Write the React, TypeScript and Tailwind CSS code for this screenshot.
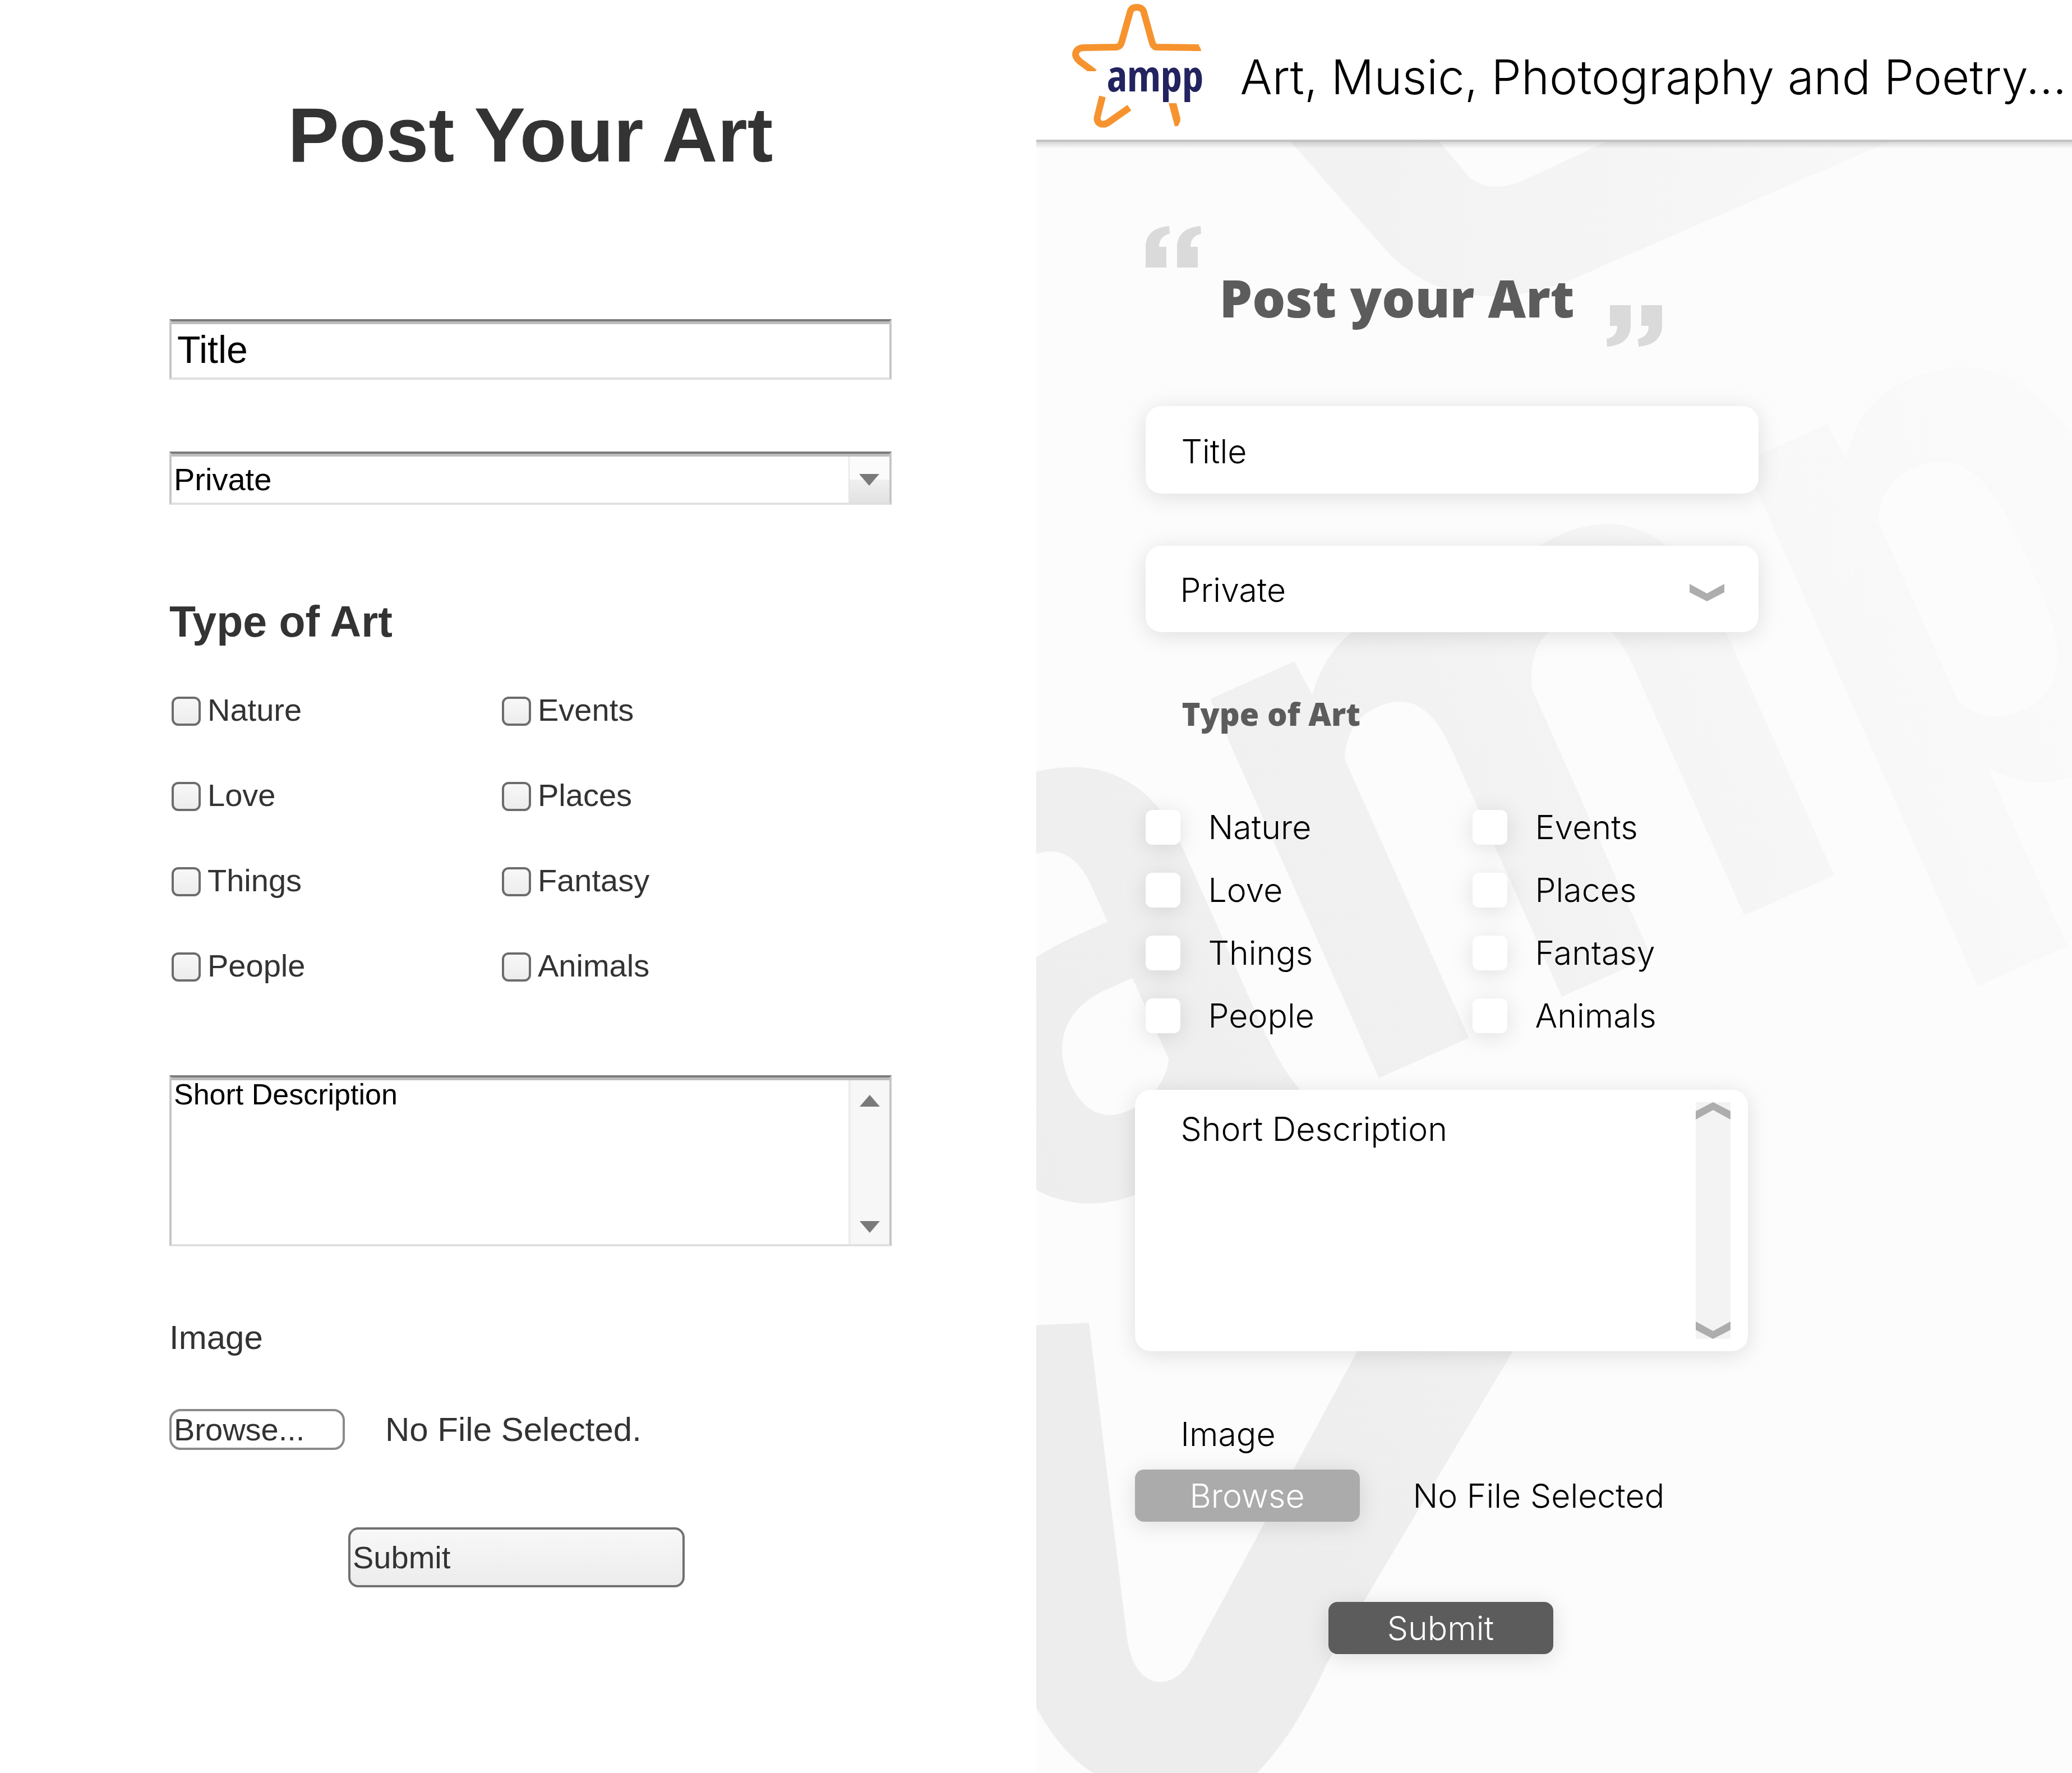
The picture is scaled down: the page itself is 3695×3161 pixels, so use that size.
const ROWS = [
  ['Nature', 'Events'],
  ['Love', 'Places'],
  ['Things', 'Fantasy'],
  ['People', 'Animals'],
];

function Logo() {
  return (
    <svg viewBox="0 0 310 240" className="h-[240px] w-[310px] shrink-0" role="img" aria-label="ampp">
      <g fill="none" stroke="#f6932f" strokeWidth="12" strokeLinejoin="round">
        <path d="M290 85 L214 84 Q209 83 207 77 L191 19 Q187 13 179 13 Q171 13 168 19 L152 76 Q150 83 143 84 L84 85 Q70 86 70 98 Q71 103 77 109 L104 129" />
        <path d="M118 172 L109 208 Q107 217 115 221 Q122 223 129 218 L166 192" />
      </g>
      <path d="M278 79 L286 79 Q293 82 294 91 L278 91 Z" fill="#f6932f" />
      <path d="M236 184 L250 184 L257 211 Q257 219 252 225 L247 225 Z" fill="#f6932f" />
      <rect x="92" y="127" width="30" height="12" fill="#fff" />
      <text x="126" y="163" fontSize="77" fontWeight="700" fill="#22235f" fontFamily="'Open Sans Condensed','Roboto Condensed','Open Sans',sans-serif">
        ampp
      </text>
    </svg>
  );
}

function Watermark() {
  return (
    <svg
      viewBox="0 249 1847 2912"
      preserveAspectRatio="xMinYMin slice"
      className="pointer-events-none absolute inset-0 h-full w-full"
      aria-hidden="true"
    >
      <defs>
        <linearGradient id="fade" gradientUnits="userSpaceOnUse" x1="0" y1="2000" x2="1600" y2="1100">
          <stop offset="0" stopColor="#ededed" />
          <stop offset="0.5" stopColor="#f3f3f3" />
          <stop offset="1" stopColor="#fafafa" />
        </linearGradient>
        <linearGradient id="fade-letters" gradientUnits="userSpaceOnUse" x1="-800" y1="0" x2="1500" y2="0">
          <stop offset="0" stopColor="#ededed" />
          <stop offset="0.5" stopColor="#f2f2f2" />
          <stop offset="0.8" stopColor="#f8f8f8" />
          <stop offset="1" stopColor="#fafafa" />
        </linearGradient>
        <linearGradient id="fade-top" gradientUnits="userSpaceOnUse" x1="600" y1="0" x2="1500" y2="0">
          <stop offset="0" stopColor="#f2f2f2" />
          <stop offset="1" stopColor="#f8f8f8" />
        </linearGradient>
      </defs>
      <path
        fill="url(#fade-top)"
        d="M454 249 L624 443 Q700 524 813 524 Q900 524 1001 474 L1520 249 L1015 249 L868 318 Q808 342 772 312 L719 249 Z"
      />
      <path
        fill="url(#fade)"
        d="M0 2358 L94 2354 L161 2910 Q172 2994 224 2994 Q262 2990 283 2940 L618 2320 L900 2320 L518 2961 Q460 3090 389 3161 L110 3161 Q50 3130 0 3040 Z"
      />
      <text
        fill="url(#fade-letters)"
        transform="translate(630 1909) rotate(-24)"
        x="-760"
        y="0"
        fontSize="1400"
        fontWeight="600"
        fontFamily="'Roboto Condensed','Open Sans Condensed','Open Sans',sans-serif"
      >
        amp
      </text>
    </svg>
  );
}

function QuoteMark({ className }: { className: string }) {
  return (
    <svg viewBox="0 0 100 74" className={className} fill="#dadada" aria-hidden="true">
      <path d="M0 74 V38 C0 14 16 2 42 0 L43 14 C31 16 24 24 24 37 H37 V74 Z" />
      <path d="M56 74 V38 C56 14 72 2 98 0 L99 14 C87 16 80 24 80 37 H93 V74 Z" />
    </svg>
  );
}

function Chevron({ className }: { className: string }) {
  return (
    <svg viewBox="0 0 62 31" className={className} fill="#adadad" aria-hidden="true">
      <path d="M0 0 L31 17 L62 0 V15 L31 31 L0 15 Z" />
    </svg>
  );
}

function Triangle({ className }: { className: string }) {
  return (
    <svg viewBox="0 0 36 21" className={className} fill="#7a7a7a" aria-hidden="true">
      <path d="M0 0 H36 L18 21 Z" />
    </svg>
  );
}

const sunken =
  'border-4 border-x-[#c6c6c6] border-b-[#e0e0e0] border-t-[#7b7b7b] shadow-[inset_0_5px_0_#bdbdbd] rounded-none bg-white text-black outline-none';

function WireframePanel() {
  return (
    <form className="bg-white pb-20 pl-[302px] pr-[258px] pt-[161px] font-['Liberation_Sans',Arial,sans-serif] text-[56px] leading-[64px] text-[#333]">
      <h1 className="text-center text-[137px] font-bold leading-[160px]">Post Your Art</h1>

      <input
        type="text"
        aria-label="Title"
        defaultValue="Title"
        className={`mt-[248px] block h-[108px] w-full pl-[10px] text-[68px] ${sunken}`}
      />

      <div className="relative mt-32">
        <select aria-label="Visibility" className={`block h-[95px] w-full appearance-none pl-1 pt-1 ${sunken}`}>
          <option>Private</option>
        </select>
        <span className="pointer-events-none absolute bottom-1 right-1 top-[9px] flex w-[73px] items-center justify-center border-l-2 border-[#e6e6e6] bg-linear-to-b from-[#fbfbfb] from-50% via-[#f0f0f0] via-50% to-[#e2e2e2]">
          <Triangle className="h-[21px] w-9" />
        </span>
      </div>

      <h2 className="mt-[164px] text-[77px] font-bold leading-[88px]">Type of Art</h2>

      <div className="mt-[82px] grid grid-cols-[589px_1fr] gap-y-[88px]">
        {ROWS.flat().map((name) => (
          <label key={name} className="flex items-center gap-3 pl-1">
            <input
              type="checkbox"
              className="mt-1 size-[52px] appearance-none rounded-[12px] border-[4px] border-[#6c6c6c] bg-linear-to-b from-[#f8f8f8] to-[#ececec]"
            />
            {name}
          </label>
        ))}
      </div>

      <div className="relative mt-[163px]">
        <textarea
          aria-label="Short description"
          defaultValue="Short Description"
          className={`block h-[305px] w-full resize-none overflow-hidden pl-1 text-[52px] leading-[60px] ${sunken}`}
        />
        <span className="pointer-events-none absolute bottom-1 right-1 top-[9px] flex w-[73px] flex-col items-center justify-between border-l-4 border-[#ececec] bg-[#f7f7f7] pb-5 pt-[26px]">
          <Triangle className="h-[21px] w-9 rotate-180" />
          <Triangle className="h-[21px] w-9" />
        </span>
      </div>

      <label htmlFor="wire-browse" className="mt-[129px] block text-[60px] leading-[68px]">
        Image
      </label>
      <div className="mt-[93px] flex items-center gap-[72px]">
        <button
          id="wire-browse"
          type="button"
          className="h-[73px] w-[313px] rounded-[20px] border-4 border-[#8a8a8a] bg-white pl-1 text-left"
        >
          Browse...
        </button>
        <span className="text-[60px]">No File Selected.</span>
      </div>

      <button
        type="submit"
        className="ml-[319px] mt-[138px] h-[107px] w-[600px] rounded-[18px] border-4 border-[#707070] bg-linear-to-b from-[#f8f8f8] to-[#ececec] pl-1 text-left"
      >
        Submit
      </button>
    </form>
  );
}

const raised = 'shadow-[0_6px_40px_rgba(0,0,0,0.12)]';

function DesignPanel() {
  return (
    <div className="flex flex-col bg-[#fcfcfc] font-[Inter,sans-serif] text-[59px] font-light leading-[64px] text-black">
      <header className="relative z-10 flex h-[253px] items-start gap-[54px] overflow-hidden border-b-4 border-[#c2c2c2] bg-white">
        <Logo />
        <p className="mt-[90px] whitespace-nowrap text-[85px] leading-[96px]">Art, Music, Photography and Poetry...</p>
      </header>

      <div className="relative grow">
        <Watermark />
        <div className="absolute inset-x-0 top-0 h-3 bg-linear-to-b from-black/15 to-transparent" />
        <form className="relative pb-20 pl-[176px] pt-[150px]">
          <div className="ml-[19px] flex items-start">
            <QuoteMark className="h-[74px] w-[100px]" />
            <h2 className="ml-8 mt-[77px] font-['Open_Sans',sans-serif] text-[93px] font-extrabold leading-[100px] text-[#5c5c5c]">
              Post your Art
            </h2>
            <QuoteMark className="ml-14 mt-[141px] h-[74px] w-[100px] rotate-180" />
          </div>

          <input
            type="text"
            aria-label="Title"
            defaultValue="Title"
            className={`ml-[19px] mt-[106px] block h-[156px] w-[1093px] rounded-[28px] bg-white pl-16 pt-1 outline-none ${raised}`}
          />

          <div className="relative ml-[19px] mt-[93px] w-[1093px]">
            <select
              aria-label="Visibility"
              className={`block h-[154px] w-full appearance-none rounded-[28px] bg-white pl-[62px] pt-1 outline-none ${raised}`}
            >
              <option>Private</option>
            </select>
            <Chevron className="pointer-events-none absolute right-[61px] top-[68px] h-[31px] w-[62px]" />
          </div>

          <h3 className="ml-[84px] mt-[113px] font-['Open_Sans',sans-serif] text-[56px] font-extrabold leading-[64px] text-[#5c5c5c]">
            Type of Art
          </h3>

          <div className="ml-[19px] mt-[139px] grid grid-cols-[583px_1fr] gap-y-12">
            {ROWS.flat().map((name) => (
              <label key={name} className="flex items-center gap-[50px]">
                <input
                  type="checkbox"
                  className={`size-[62px] appearance-none rounded-[12px] bg-white ${raised}`}
                />
                {name}
              </label>
            ))}
          </div>

          <div className="relative mt-[100px] w-[1093px]">
            <textarea
              aria-label="Short description"
              defaultValue="Short Description"
              className={`block h-[466px] w-full resize-none overflow-hidden rounded-[28px] bg-white pl-[82px] pt-[38px] outline-none ${raised}`}
            />
            <span className="pointer-events-none absolute bottom-[22px] right-[31px] top-[22px] flex w-[62px] flex-col justify-between bg-[#f3f3f3]">
              <Chevron className="h-[31px] w-[62px] rotate-180" />
              <Chevron className="h-[31px] w-[62px]" />
            </span>
          </div>

          <label htmlFor="design-browse" className="ml-[82px] mt-[116px] block">
            Image
          </label>
          <div className="mt-[31px] flex items-center gap-[95px]">
            <button
              id="design-browse"
              type="button"
              className={`h-[93px] w-[401px] rounded-[16px] bg-[#ababab] text-white ${raised}`}
            >
              Browse
            </button>
            <span>No File Selected</span>
          </div>

          <button
            type="submit"
            className={`ml-[345px] mt-[143px] h-[93px] w-[401px] rounded-[16px] bg-[#5c5c5c] text-white ${raised}`}
          >
            Submit
          </button>
        </form>
      </div>
    </div>
  );
}

export default function App() {
  return (
    <main className="grid min-h-screen grid-cols-2 bg-white">
      <WireframePanel />
      <DesignPanel />
    </main>
  );
}
